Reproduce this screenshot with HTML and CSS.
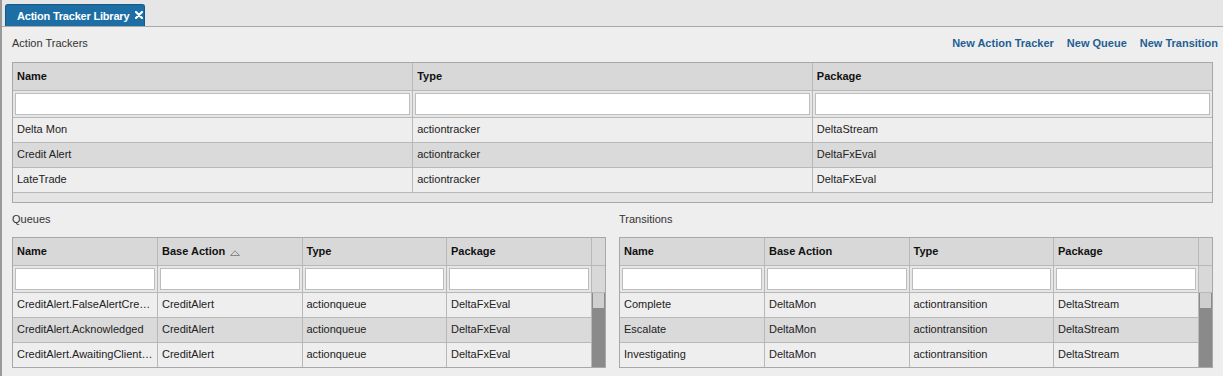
FILE: index.html
```html
<!DOCTYPE html>
<html lang="en">
<head>
  <meta charset="UTF-8" />
  <title>Action Tracker Library</title>
  <link rel="stylesheet" href="styles.css">
</head>
<body>

  <div class="tabbar">
    <div class="tab">
      <span class="tab-title">Action Tracker Library</span>
      <svg class="tab-close" width="8" height="8" viewBox="0 0 8 8"><path d="M1 1 L7 7 M7 1 L1 7" stroke="#fff" stroke-width="2.2" stroke-linecap="round"/></svg>
    </div>
  </div>

  <div class="page">
    <div class="section-head">
      <span class="section-title">Action Trackers</span>
      <div class="actions">
        <a href="#">New Action Tracker</a>
        <a href="#">New Queue</a>
        <a href="#">New Transition</a>
      </div>
    </div>

    <div class="grid">
      <table class="cols-3">
        <thead>
          <tr class="head"><th>Name</th><th>Type</th><th>Package</th></tr>
          <tr class="filter"><td><input type="text"></td><td><input type="text"></td><td><input type="text"></td></tr>
        </thead>
        <tbody>
          <tr><td>Delta Mon</td><td>actiontracker</td><td>DeltaStream</td></tr>
          <tr class="alt"><td>Credit Alert</td><td>actiontracker</td><td>DeltaFxEval</td></tr>
          <tr><td>LateTrade</td><td>actiontracker</td><td>DeltaFxEval</td></tr>
        </tbody>
      </table>
      <div class="hscroll"></div>
    </div>

    <div class="bottom">
      <div class="panel">
        <div class="section-head small">
          <span class="section-title">Queues</span>
        </div>
        <div class="grid">
          <table class="cols-4">
            <colgroup><col><col><col><col><col class="sb"></colgroup>
            <thead>
              <tr class="head"><th>Name</th><th>Base Action <svg class="sort" width="10" height="6" viewBox="0 0 10 6"><path d="M0.5 5.5 L5 0.8 L9.5 5.5 Z" fill="none" stroke="#888" stroke-width="1"/></svg></th><th>Type</th><th>Package</th><th class="sb-cell"></th></tr>
              <tr class="filter"><td><input type="text"></td><td><input type="text"></td><td><input type="text"></td><td><input type="text"></td><td class="sb-cell"></td></tr>
            </thead>
            <tbody>
              <tr><td>CreditAlert.FalseAlertCreated</td><td>CreditAlert</td><td>actionqueue</td><td>DeltaFxEval</td><td class="sb-track" rowspan="3"><div class="sb-thumb"></div></td></tr>
              <tr class="alt"><td>CreditAlert.Acknowledged</td><td>CreditAlert</td><td>actionqueue</td><td>DeltaFxEval</td></tr>
              <tr><td>CreditAlert.AwaitingClientResponse</td><td>CreditAlert</td><td>actionqueue</td><td>DeltaFxEval</td></tr>
            </tbody>
          </table>
        </div>
      </div>

      <div class="panel">
        <div class="section-head small">
          <span class="section-title">Transitions</span>
        </div>
        <div class="grid">
          <table class="cols-4">
            <colgroup><col><col><col><col><col class="sb"></colgroup>
            <thead>
              <tr class="head"><th>Name</th><th>Base Action</th><th>Type</th><th>Package</th><th class="sb-cell"></th></tr>
              <tr class="filter"><td><input type="text"></td><td><input type="text"></td><td><input type="text"></td><td><input type="text"></td><td class="sb-cell"></td></tr>
            </thead>
            <tbody>
              <tr><td>Complete</td><td>DeltaMon</td><td>actiontransition</td><td>DeltaStream</td><td class="sb-track" rowspan="3"><div class="sb-thumb"></div></td></tr>
              <tr class="alt"><td>Escalate</td><td>DeltaMon</td><td>actiontransition</td><td>DeltaStream</td></tr>
              <tr><td>Investigating</td><td>DeltaMon</td><td>actiontransition</td><td>DeltaStream</td></tr>
            </tbody>
          </table>
        </div>
      </div>
    </div>
  </div>

</body>
</html>
```

FILE: styles.css
```css
body, html {
  margin: 0;
  padding: 0;
  font-family: 'Liberation Sans', Arial, sans-serif;
  font-size: 11px;
  color: #222;
  background-color: #eeeeee;
}

body {
  border-left: 2px solid #999;
  height: 376px;
  box-sizing: border-box;
  overflow: hidden;
}

.tabbar {
  height: 26px;
  background-color: #e6e6e6;
  border-bottom: 1px solid #aaa;
  padding-left: 3px;
  display: flex;
  align-items: flex-end;
}

.tab {
  width: 140px;
  height: 22px;
  box-sizing: border-box;
  background-color: #1d6ea5;
  border: 1px solid #175a88;
  border-bottom: none;
  border-radius: 3px 3px 0 0;
  display: flex;
  align-items: center;
  padding: 0 0 0 11px;
  color: white;
  font-weight: 700;
  white-space: nowrap;
}

.tab-title {
  letter-spacing: -0.2px;
}

.tab-close {
  margin-left: 6px;
  margin-top: -1px;
  flex-shrink: 0;
}

.page {
  padding: 0 10px;
}

.section-head {
  height: 35px;
  display: flex;
  align-items: center;
  justify-content: space-between;
  padding-bottom: 3px;
  box-sizing: border-box;
}

.section-head.small {
  height: 34px;
}

.section-title {
  color: #333;
}

.actions {
  display: flex;
  gap: 13px;
  margin-right: -5px;
}

.actions a {
  color: #1f5f94;
  font-weight: 700;
  text-decoration: none;
}

.grid {
  border: 1px solid #a8a8a8;
  background-color: #eeeeee;
}

table {
  width: 100%;
  border-collapse: collapse;
  border-style: hidden;
  table-layout: fixed;
}

th, td {
  border: 1px solid #b8b8b8;
  padding: 0 4px;
  text-align: left;
  white-space: nowrap;
  overflow: hidden;
  text-overflow: ellipsis;
}

tr.head th {
  height: 26px;
  padding-bottom: 1px;
  background-color: #d8d8d8;
  font-weight: 700;
  color: #111;
}

.sort {
  margin-left: 2px;
  vertical-align: -1px;
}

tr.filter td {
  height: 26px;
  padding: 0 2px;
  background-color: #e6e6e6;
}

tr.filter input {
  display: block;
  width: 100%;
  height: 22px;
  box-sizing: border-box;
  border: 1px solid #bdbdbd;
  background: white;
  margin: 0;
}

tbody td {
  height: 22px;
  padding-bottom: 2px;
  background-color: #eeeeee;
}

tbody tr.alt td {
  background-color: #dadada;
}

.hscroll {
  height: 9px;
  border-top: 1px solid #b8b8b8;
  background-color: #e4e4e4;
}

.bottom {
  display: grid;
  grid-template-columns: 1fr 1fr;
  gap: 13px;
}

col.sb {
  width: 14px;
}

th.sb-cell, td.sb-cell {
  padding: 0;
  background-color: #d8d8d8;
}

tr.filter td.sb-cell {
  background-color: #d8d8d8;
}

td.sb-track {
  padding: 0 1px;
  vertical-align: top;
  background-color: #8a8a8a;
  border-left: 1px solid #b8b8b8;
}

.sb-thumb {
  height: 15px;
  background-color: #cfcfcf;
}
```
